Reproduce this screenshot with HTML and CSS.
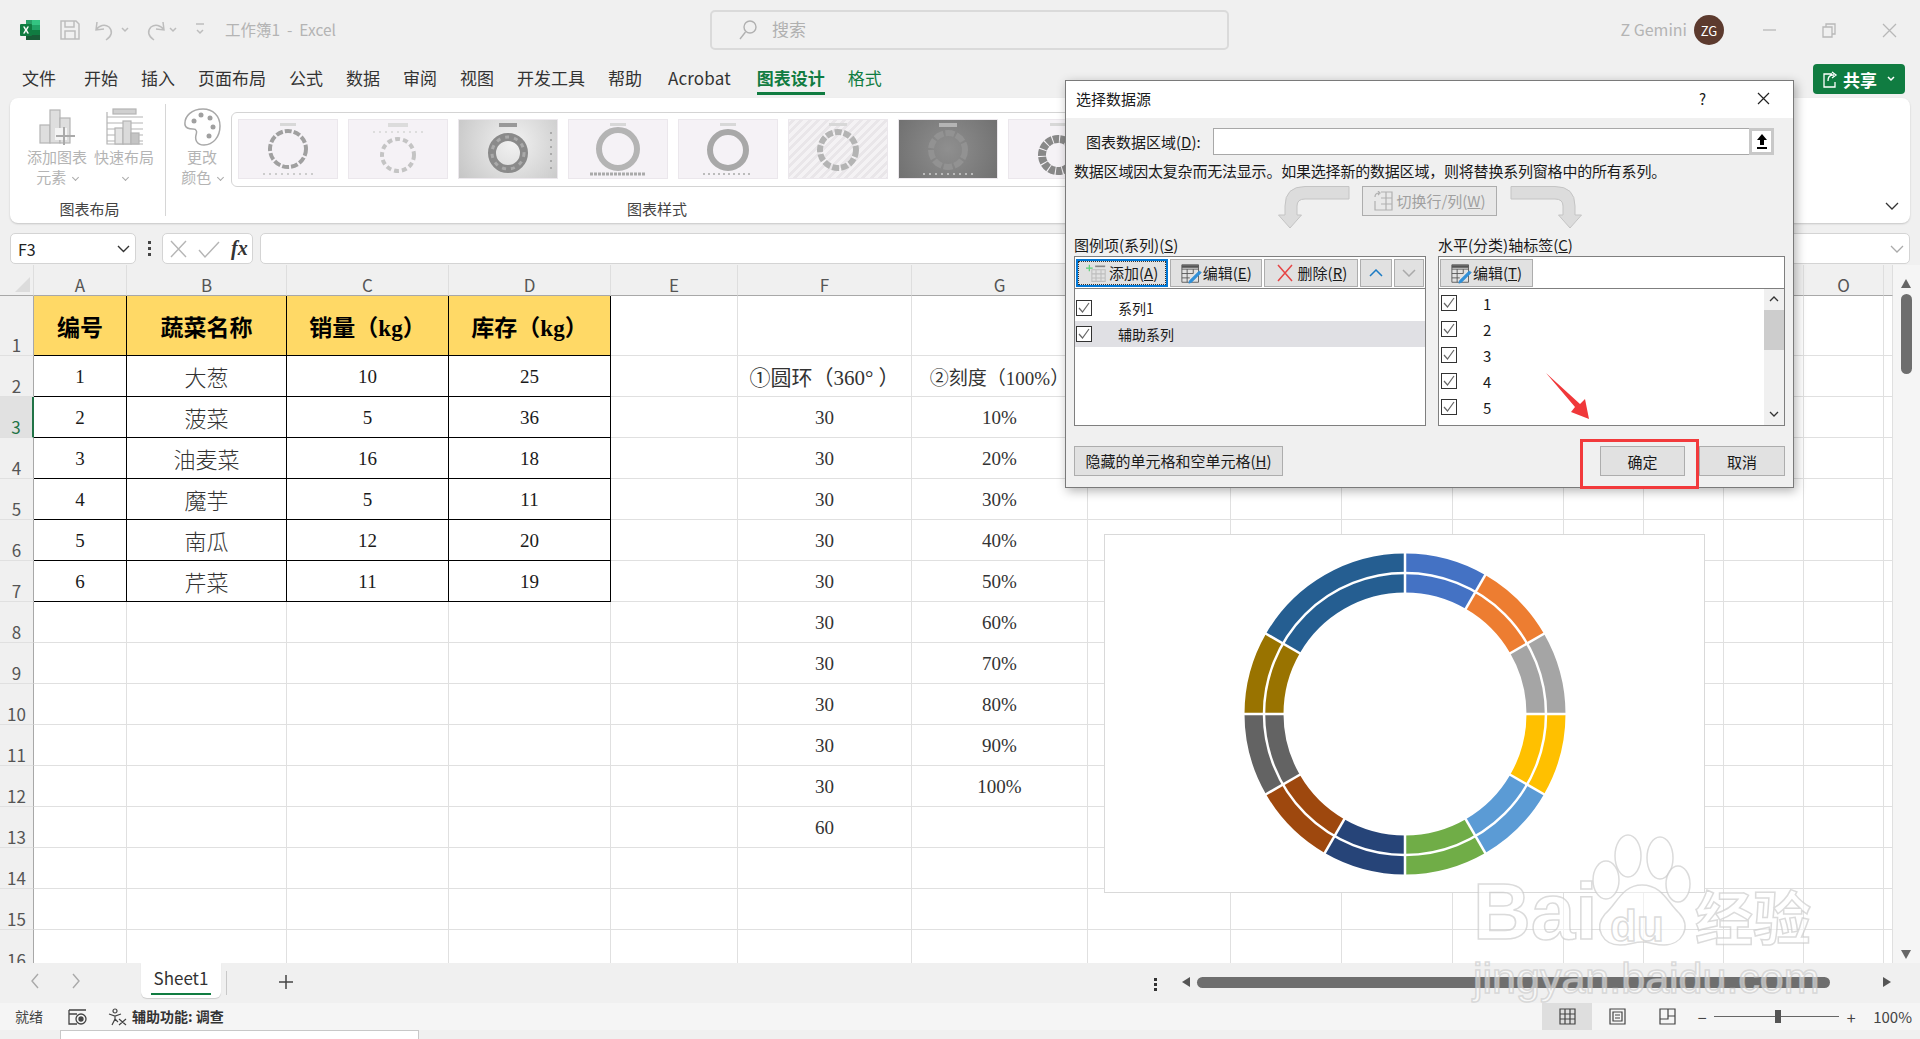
FILE: index.html
```html
<!DOCTYPE html>
<html lang="zh-CN">
<head>
<meta charset="utf-8">
<title>工作簿1 - Excel</title>
<link rel="stylesheet" href="styles.css">
</head>
<body>
<header class="titlebar">
  <div class="tb-left">
    <svg class="xl-logo" width="20" height="20" viewBox="0 0 20 20"><path d="M6 0h9l5 0v5H6z" fill="#33c481"/><path d="M6 5h14v5H6z" fill="#21a366"/><path d="M6 10h14v5H6z" fill="#107c41"/><path d="M6 15h14v5H6z" fill="#185c37"/><path d="M6 0h6v20H6z" fill="#185c37" opacity=".35"/><rect x="0" y="4" width="12" height="12" rx="1" fill="#107c41"/><path d="M3 6.500h1.800L6 9l1.300-2.500H9L7 10l2 3.500H7.200L6 11 4.800 13.500H3L5 10z" fill="#fff"/></svg>
    <svg class="qat" width="150" height="22" viewBox="0 0 150 22" fill="none" stroke="#bdbdbd" stroke-width="1.500"><path d="M1 2h15l3 3v15H1z"/><path d="M5 2v6h9V2M5 20v-8h10v8"/><path d="M37 3l-1 8 8-1M36 11c3-5 9-6 13-3 4 4 3 9-3 13"/><path d="M62 9l3 3 3-3"/><path d="M103 3l1 8-8-1M104 11c-3-5-9-6-13-3-4 4-3 9 3 13"/><path d="M110 9l3 3 3-3M136 5h8M137 11l3 3 3-3"/></svg>
    <span class="doc-title">工作簿1&nbsp;&nbsp;-&nbsp;&nbsp;Excel</span>
  </div>
  <div class="search">
    <svg width="18" height="22" viewBox="0 0 18 22" fill="none" stroke="#b0b0b0" stroke-width="1.400"><circle cx="11" cy="8" r="6"/><path d="M6.500 13L1 20"/></svg>
    <span>搜索</span>
  </div>
  <div class="tb-right">
    <span class="user">Z Gemini</span>
    <span class="avatar">ZG</span>
    <svg class="winctl" width="134" height="16" viewBox="0 0 134 16" fill="none" stroke="#b8b8b8" stroke-width="1.300"><path d="M0 8h13"/><path d="M60 5h9v10h-9zM63 5V2h9v10h-3"/><path d="M120 2l13 13M133 2l-13 13"/></svg>
  </div>
</header>

<nav class="tabs">
  <span class="tab tab-first">文件</span><span class="tab">开始</span><span class="tab">插入</span><span class="tab">页面布局</span><span class="tab">公式</span><span class="tab">数据</span><span class="tab">审阅</span><span class="tab">视图</span><span class="tab">开发工具</span><span class="tab">帮助</span><span class="tab tab-wide">Acrobat</span><span class="tab tab-wide tab-active">图表设计</span><span class="tab tab-green">格式</span>
  <button class="share">
    <svg width="16" height="17" viewBox="0 0 16 17" fill="none" stroke="#fff" stroke-width="1.300"><path d="M10 3H2v13h11v-5M6 10c0-4 2-6 5-6h1M10 1l4 3-4 3"/></svg>
    <span>共享</span>
    <svg class="share-chev" width="8" height="6" viewBox="0 0 8 6" fill="none" stroke="#fff" stroke-width="1.500"><path d="M1 1l3 3 3-3"/></svg>
  </button>
</nav>

<section class="ribbon">
  <div class="rb-group rb-g1">
    <div class="rb-btns">
      <div class="rb-btn rb-b1">
        <svg width="37" height="38" viewBox="0 0 37 38" fill="none" stroke="#b4b4b4" stroke-width="1.200"><rect x="1" y="17" width="10" height="18" fill="#dedede"/><rect x="11" y="2" width="10" height="33" fill="#dedede"/><rect x="21" y="10" width="10" height="25" fill="#dedede"/><rect x="16" y="20" width="12" height="12" fill="#f4f4f4" stroke="none"/><path d="M25 19v18M17 28h19" stroke="#aaa" stroke-width="2"/></svg>
        <span>添加图表</span><span>元素 <i class="chev"></i></span>
      </div>
      <div class="rb-btn rb-b2">
        <svg width="37" height="38" viewBox="0 0 37 38" fill="none" stroke="#b4b4b4" stroke-width="1.200"><rect x="7" y="1" width="23" height="5" fill="#d0d0d0"/><path d="M1 9h36M1 15h36M1 21h36M1 27h36M1 33h36M1 4v32h36"/><rect x="9" y="20" width="8" height="16" fill="#e4e4e4"/><rect x="17" y="13" width="8" height="23" fill="#dadada"/><rect x="25" y="25" width="8" height="11" fill="#c4c4c4"/></svg>
        <span>快速布局</span><span><i class="chev"></i></span>
      </div>
    </div>
    <div class="rb-label">图表布局</div>
  </div>
  <div class="rb-group rb-g2">
    <div class="rb-row">
      <div class="rb-btn rb-b3">
        <svg width="37" height="38" viewBox="0 0 37 38" fill="#fff" stroke="#a8a8a8" stroke-width="1.500"><path d="M19 1C8 1 0 8 1 17c1 4 5 4 8 4 4 0 4 3 3 6-1 4 0 10 8 10 9 0 16-8 16-19C36 8 29 1 19 1z"/><g fill="#a0a0a0" stroke="none"><circle cx="10" cy="13" r="2.500"/><circle cx="17" cy="7" r="2.500"/><circle cx="26" cy="10" r="2.500"/><circle cx="29" cy="19" r="2.500"/><circle cx="25" cy="28" r="2.500"/></g></svg>
        <span>更改</span><span>颜色 <i class="chev"></i></span>
      </div>
      <div class="gallery">
        <div class="thumb"><svg width="100" height="60"><rect x="42" y="4" width="16" height="3" fill="#d8d8d8"/><circle cx="50" cy="30" r="18" fill="none" stroke="#a0a0a0" stroke-width="4" stroke-dasharray="7 2"/><path d="M25 55h50" stroke="#ccc" stroke-dasharray="2 4" stroke-width="2"/></svg></div>
        <div class="thumb"><svg width="100" height="60"><rect x="40" y="4" width="20" height="4" fill="#dcdcdc"/><path d="M25 13h50" stroke="#ddd" stroke-dasharray="2 4" stroke-width="2"/><circle cx="50" cy="36" r="16" fill="none" stroke="#c4c4c4" stroke-width="4" stroke-dasharray="5 3"/></svg></div>
        <div class="thumb thumb-grey"><svg width="100" height="60"><rect x="41" y="4" width="18" height="4" fill="#999"/><circle cx="50" cy="34" r="16" fill="none" stroke="#8a8a8a" stroke-width="8"/><circle cx="50" cy="34" r="16" fill="none" stroke="#aaa" stroke-width="3" stroke-dasharray="4 5"/><path d="M93 13v40" stroke="#aaa" stroke-dasharray="2 5" stroke-width="2"/></svg></div>
        <div class="thumb"><svg width="100" height="60"><rect x="42" y="4" width="16" height="3" fill="#d8d8d8"/><circle cx="50" cy="30" r="19" fill="none" stroke="#b4b4b4" stroke-width="6"/><path d="M22 55h56" stroke="#aaa" stroke-dasharray="3 1" stroke-width="3"/></svg></div>
        <div class="thumb"><svg width="100" height="60"><rect x="42" y="4" width="16" height="3" fill="#d8d8d8"/><circle cx="50" cy="31" r="18" fill="none" stroke="#a8a8a8" stroke-width="6"/><path d="M25 55h50" stroke="#bbb" stroke-dasharray="2 3" stroke-width="2"/></svg></div>
        <div class="thumb thumb-stripe"><svg width="100" height="60"><rect x="41" y="4" width="18" height="3" fill="#d8d8d8"/><circle cx="50" cy="31" r="18" fill="none" stroke="#b4b4b4" stroke-width="6" stroke-dasharray="7 2"/></svg></div>
        <div class="thumb thumb-dark"><svg width="100" height="60"><rect x="41" y="4" width="18" height="4" fill="#b4b4b4"/><circle cx="50" cy="31" r="17" fill="none" stroke="#929292" stroke-width="6" stroke-dasharray="9 2"/><path d="M25 55h50" stroke="#bbb" stroke-dasharray="2 4" stroke-width="2"/></svg></div>
        <div class="thumb"><svg width="100" height="60"><rect x="42" y="4" width="16" height="3" fill="#d8d8d8"/><circle cx="50" cy="36" r="16" fill="none" stroke="#888" stroke-width="8" stroke-dasharray="6 1"/></svg></div>
      </div>
    </div>
    <div class="rb-label">图表样式</div>
  </div>
  <svg class="rb-collapse" width="14" height="9" viewBox="0 0 14 9" fill="none" stroke="#333" stroke-width="1.300"><path d="M1 1l6 6 6-6"/></svg>
</section>

<section class="fbar">
  <div class="namebox"><span>F3</span><svg width="13" height="8" viewBox="0 0 13 8" fill="none" stroke="#333" stroke-width="1.400"><path d="M1 1l5.500 5.500L12 1"/></svg></div>
  <div class="fdots"><i></i><i></i><i></i></div>
  <div class="fxbox">
    <svg width="54" height="20" viewBox="0 0 54 20" fill="none" stroke="#b5b5b5" stroke-width="1.400"><path d="M1 2l15 16M16 2L1 18M29 11l6 7 14-15"/></svg>
    <span class="fx">fx</span>
  </div>
  <div class="finput"><svg width="14" height="8" viewBox="0 0 14 8" fill="none" stroke="#aaa" stroke-width="1.300"><path d="M1 1l6 6 6-6"/></svg></div>
</section>

<main class="sheet">
  <div class="grid-wrap">
    <table class="grid">
      <colgroup><col class="w34"><col class="w93"><col class="w160"><col class="w162"><col class="w162"><col class="w127"><col class="w174"><col class="w176"><col class="w143"><col class="w111"><col class="w111"><col class="w111"><col class="w80"><col class="w80"><col class="w80"><col class="w80"><col class="w9"></colgroup>
      <thead><tr><th class="corner"><span class="tri"></span></th><th class="hc">A</th><th class="hc">B</th><th class="hc">C</th><th class="hc">D</th><th class="hc">E</th><th class="hc">F</th><th class="hc">G</th><th class="hc">H</th><th class="hc">I</th><th class="hc">J</th><th class="hc">K</th><th class="hc">L</th><th class="hc">M</th><th class="hc">N</th><th class="hc">O</th><th class="hc"></th></tr></thead>
      <tbody>
        <tr class="r1"><th class="hr">1</th><td class="y">编号</td><td class="y">蔬菜名称</td><td class="y">销量（kg）</td><td class="y">库存（kg）</td><td></td><td></td><td></td><td></td><td></td><td></td><td></td><td></td><td></td><td></td><td></td><td></td></tr>
        <tr><th class="hr">2</th><td class="b">1</td><td class="b z">大葱</td><td class="b">10</td><td class="b">25</td><td></td><td class="s s-ring">①圆环（360° ）</td><td class="s s-scale">②刻度（100%）</td><td></td><td></td><td></td><td></td><td></td><td></td><td></td><td></td><td></td></tr>
        <tr><th class="hr hr-sel">3</th><td class="b">2</td><td class="b z">菠菜</td><td class="b">5</td><td class="b">36</td><td></td><td class="s">30</td><td class="s">10%</td><td></td><td></td><td></td><td></td><td></td><td></td><td></td><td></td><td></td></tr>
        <tr><th class="hr">4</th><td class="b">3</td><td class="b z">油麦菜</td><td class="b">16</td><td class="b">18</td><td></td><td class="s">30</td><td class="s">20%</td><td></td><td></td><td></td><td></td><td></td><td></td><td></td><td></td><td></td></tr>
        <tr><th class="hr">5</th><td class="b">4</td><td class="b z">魔芋</td><td class="b">5</td><td class="b">11</td><td></td><td class="s">30</td><td class="s">30%</td><td></td><td></td><td></td><td></td><td></td><td></td><td></td><td></td><td></td></tr>
        <tr><th class="hr">6</th><td class="b">5</td><td class="b z">南瓜</td><td class="b">12</td><td class="b">20</td><td></td><td class="s">30</td><td class="s">40%</td><td></td><td></td><td></td><td></td><td></td><td></td><td></td><td></td><td></td></tr>
        <tr><th class="hr">7</th><td class="b">6</td><td class="b z">芹菜</td><td class="b">11</td><td class="b">19</td><td></td><td class="s">30</td><td class="s">50%</td><td></td><td></td><td></td><td></td><td></td><td></td><td></td><td></td><td></td></tr>
        <tr><th class="hr">8</th><td></td><td></td><td></td><td></td><td></td><td class="s">30</td><td class="s">60%</td><td></td><td></td><td></td><td></td><td></td><td></td><td></td><td></td><td></td></tr>
        <tr><th class="hr">9</th><td></td><td></td><td></td><td></td><td></td><td class="s">30</td><td class="s">70%</td><td></td><td></td><td></td><td></td><td></td><td></td><td></td><td></td><td></td></tr>
        <tr><th class="hr">10</th><td></td><td></td><td></td><td></td><td></td><td class="s">30</td><td class="s">80%</td><td></td><td></td><td></td><td></td><td></td><td></td><td></td><td></td><td></td></tr>
        <tr><th class="hr">11</th><td></td><td></td><td></td><td></td><td></td><td class="s">30</td><td class="s">90%</td><td></td><td></td><td></td><td></td><td></td><td></td><td></td><td></td><td></td></tr>
        <tr><th class="hr">12</th><td></td><td></td><td></td><td></td><td></td><td class="s">30</td><td class="s">100%</td><td></td><td></td><td></td><td></td><td></td><td></td><td></td><td></td><td></td></tr>
        <tr><th class="hr">13</th><td></td><td></td><td></td><td></td><td></td><td class="s">60</td><td></td><td></td><td></td><td></td><td></td><td></td><td></td><td></td><td></td><td></td></tr>
        <tr><th class="hr">14</th><td></td><td></td><td></td><td></td><td></td><td></td><td></td><td></td><td></td><td></td><td></td><td></td><td></td><td></td><td></td><td></td></tr>
        <tr><th class="hr">15</th><td></td><td></td><td></td><td></td><td></td><td></td><td></td><td></td><td></td><td></td><td></td><td></td><td></td><td></td><td></td><td></td></tr>
        <tr><th class="hr">16</th><td></td><td></td><td></td><td></td><td></td><td></td><td></td><td></td><td></td><td></td><td></td><td></td><td></td><td></td><td></td><td></td></tr>
      </tbody>
    </table>
    <div class="chart">
      <svg width="600" height="358" viewBox="-300 -179 600 358" fill="none" stroke-width="39">
        <g class="ring">
          <circle r="141" pathLength="360" stroke-dasharray="30 330" stroke="#4472c4" transform="rotate(-90)"/>
          <circle r="141" pathLength="360" stroke-dasharray="30 330" stroke="#ed7d31" transform="rotate(-60)"/>
          <circle r="141" pathLength="360" stroke-dasharray="30 330" stroke="#a5a5a5" transform="rotate(-30)"/>
          <circle r="141" pathLength="360" stroke-dasharray="30 330" stroke="#ffc000" transform="rotate(0)"/>
          <circle r="141" pathLength="360" stroke-dasharray="30 330" stroke="#5b9bd5" transform="rotate(30)"/>
          <circle r="141" pathLength="360" stroke-dasharray="30 330" stroke="#70ad47" transform="rotate(60)"/>
          <circle r="141" pathLength="360" stroke-dasharray="30 330" stroke="#264478" transform="rotate(90)"/>
          <circle r="141" pathLength="360" stroke-dasharray="30 330" stroke="#9e480e" transform="rotate(120)"/>
          <circle r="141" pathLength="360" stroke-dasharray="30 330" stroke="#636363" transform="rotate(150)"/>
          <circle r="141" pathLength="360" stroke-dasharray="30 330" stroke="#997300" transform="rotate(180)"/>
          <circle r="141" pathLength="360" stroke-dasharray="60 300" stroke="#255e91" transform="rotate(210)"/>
        </g>
        <circle r="141" stroke="#fff" stroke-width="2.500"/>
        <g stroke="#fff" stroke-width="2.500">
          <path d="M0-119V-163"/>
          <path d="M0-119V-163" transform="rotate(30)"/><path d="M0-119V-163" transform="rotate(60)"/><path d="M0-119V-163" transform="rotate(90)"/><path d="M0-119V-163" transform="rotate(120)"/><path d="M0-119V-163" transform="rotate(150)"/><path d="M0-119V-163" transform="rotate(180)"/><path d="M0-119V-163" transform="rotate(210)"/><path d="M0-119V-163" transform="rotate(240)"/><path d="M0-119V-163" transform="rotate(270)"/><path d="M0-119V-163" transform="rotate(300)"/>
        </g>
      </svg>
    </div>
  </div>
  <aside class="vscroll">
    <i class="tri-up"></i>
    <i class="vthumb"></i>
    <i class="tri-down"></i>
  </aside>
</main>

<footer class="sheetbar">
  <svg class="sb-nav" width="50" height="16" viewBox="0 0 50 16" fill="none" stroke="#aaa" stroke-width="1.400"><path d="M7 1L1 8l6 7M42 1l6 7-6 7"/></svg>
  <div class="sheet-tab"><span>Sheet1</span></div>
  <i class="sb-sep"></i>
  <svg class="sb-plus" width="14" height="14" viewBox="0 0 14 14" stroke="#444" stroke-width="1.500"><path d="M7 0v14M0 7h14"/></svg>
  <div class="sb-dots"><i></i><i></i><i></i></div>
  <i class="tri-left"></i>
  <div class="hscroll"></div>
  <i class="tri-right"></i>
</footer>

<footer class="status">
  <span class="st-ready">就绪</span>
  <svg class="st-macro" width="19" height="18" viewBox="0 0 19 18" fill="none" stroke="#444" stroke-width="1.300"><path d="M1 2h17M1 6h8M1 2v14h8"/><circle cx="13" cy="11" r="5"/><circle cx="13" cy="11" r="2" fill="#444"/></svg>
  <svg class="st-acc" width="19" height="18" viewBox="0 0 19 18" fill="none" stroke="#444" stroke-width="1.200"><circle cx="7" cy="3" r="2"/><path d="M1 6l6 2 6-2M7 8v3l-3 6M7 11l3 3M11 11l7 6M18 11l-7 6"/></svg>
  <strong class="st-text">辅助功能: 调查</strong>
  <div class="views">
    <span class="view view-on"><svg width="17" height="17" viewBox="0 0 17 17" fill="none" stroke="#444" stroke-width="1.200"><path d="M1 1h15v15H1zM1 6h15M1 11h15M6 1v15M11 1v15"/></svg></span>
    <span class="view"><svg width="17" height="17" viewBox="0 0 17 17" fill="none" stroke="#444" stroke-width="1.200"><path d="M1 1h15v15H1zM4 4h9v9H4zM6 7h5M6 10h5"/></svg></span>
    <span class="view"><svg width="17" height="17" viewBox="0 0 17 17" fill="none" stroke="#444" stroke-width="1.200"><path d="M1 1h15v15H1zM1 11h8V1M9 8h7"/></svg></span>
  </div>
  <div class="zoom">
    <span class="zm">−</span>
    <div class="slider"><i></i></div>
    <span class="zm">+</span>
    <span class="zv">100%</span>
  </div>
</footer>
<div class="strip"><div class="strip-win"></div></div>

<div class="dialog">
  <div class="dl-title">
    <span>选择数据源</span>
    <span class="dl-help">?</span>
    <svg width="13" height="13" viewBox="0 0 13 13" fill="none" stroke="#222" stroke-width="1.200"><path d="M1 1l11 11M12 1L1 12"/></svg>
  </div>
  <div class="dl-body">
    <div class="range">
      <label>图表数据区域(<u>D</u>):</label>
      <div class="range-input"><span class="range-btn"><svg width="12" height="16" viewBox="0 0 12 16"><path d="M6 0l5 6H8v5H4V6H1zM1 13h10v2H1z" fill="#000"/></svg></span></div>
    </div>
    <p class="info">数据区域因太复杂而无法显示。如果选择新的数据区域，则将替换系列窗格中的所有系列。</p>
    <div class="switch">
      <svg width="72" height="43" viewBox="0 0 72 43"><path d="M71 .5H27Q7 .5 7 20v9H.5L12 42 23.500 29H19V20q0-7 8-7H71z" fill="#dcdcdc" stroke="#c4c4c4"/></svg>
      <span class="btn btn-off">
        <svg width="20" height="20" viewBox="0 0 20 20" fill="none" stroke="#b0b0b0" stroke-width="1.200"><path d="M8 1h11v18H2V10M8 7h11M8 13h11M13 1v18"/><path d="M2 6c0-3 2-4 4-4M5 0l2 2-2 2" /></svg>
        <span>切换行/列(<u>W</u>)</span>
      </span>
      <svg width="72" height="43" viewBox="0 0 72 43"><path d="M1 .5H45Q65 .5 65 20v9h6.500L60 42 48.500 29H53V20q0-7-8-7H1z" fill="#dcdcdc" stroke="#c4c4c4"/></svg>
    </div>
    <div class="lists">
      <div class="list-col">
        <div class="list-label">图例项(系列)(<u>S</u>)</div>
        <div class="listbox">
          <div class="list-tools">
            <span class="btn tool tool-add"><svg width="20" height="20" viewBox="0 0 24 22" fill="none" stroke="#bdbdbd" stroke-width="1.300"><path d="M7 7h16v14H7zM7 12h16M7 17h16M12 7v14M18 7v14"/><path d="M11 3h12" stroke="#888" stroke-width="2"/><path d="M4 1v8M0 5h8" stroke="#5fd07a" stroke-width="1.500"/></svg><span>添加(<u>A</u>)</span></span>
            <span class="btn tool tool-edit"><svg width="21" height="21" viewBox="0 0 24 24" fill="none" stroke="#555" stroke-width="1"><path d="M1 2h19v20H1zM1 7h19M1 12h13M1 17h9M7 7v15M14 7v5"/><path d="M1 4h19" stroke-width="3"/><path d="M21 9L10 20l-1 3 3-1L23 11z" fill="#2f8fd8" stroke="#2f8fd8"/></svg><span>编辑(<u>E</u>)</span></span>
            <span class="btn tool tool-del"><svg width="16" height="18" viewBox="0 0 16 18" fill="none" stroke="#e64545" stroke-width="1.500"><path d="M1 1l14 16M15 1L1 17"/></svg><span>删除(<u>R</u>)</span></span>
            <span class="btn tool tool-up"><svg width="14" height="8" viewBox="0 0 14 8" fill="none" stroke="#1c7cc4" stroke-width="1.500"><path d="M1 7l6-6 6 6"/></svg></span>
            <span class="btn tool tool-down"><svg width="14" height="8" viewBox="0 0 14 8" fill="none" stroke="#aaa" stroke-width="1.500"><path d="M1 1l6 6 6-6"/></svg></span>
          </div>
          <div class="rows rows-left">
            <div class="lrow"><span class="chk"><svg width="12" height="12" viewBox="0 0 12 12" fill="none" stroke="#666" stroke-width="1.200"><path d="M1 6l3.500 4L11 1"/></svg></span><span class="ltext">系列1</span></div>
            <div class="lrow lrow-sel"><span class="chk"><svg width="12" height="12" viewBox="0 0 12 12" fill="none" stroke="#666" stroke-width="1.200"><path d="M1 6l3.500 4L11 1"/></svg></span><span class="ltext">辅助系列</span></div>
          </div>
        </div>
      </div>
      <div class="list-col">
        <div class="list-label">水平(分类)轴标签(<u>C</u>)</div>
        <div class="listbox">
          <div class="list-tools">
            <span class="btn tool tool-edit"><svg width="21" height="21" viewBox="0 0 24 24" fill="none" stroke="#555" stroke-width="1"><path d="M1 2h19v20H1zM1 7h19M1 12h13M1 17h9M7 7v15M14 7v5"/><path d="M1 4h19" stroke-width="3"/><path d="M21 9L10 20l-1 3 3-1L23 11z" fill="#2f8fd8" stroke="#2f8fd8"/></svg><span>编辑(<u>T</u>)</span></span>
          </div>
          <div class="rows-right">
            <div class="rows">
              <div class="rrow"><span class="chk"><svg width="12" height="12" viewBox="0 0 12 12" fill="none" stroke="#666" stroke-width="1.200"><path d="M1 6l3.500 4L11 1"/></svg></span><span class="rtext">1</span></div>
              <div class="rrow"><span class="chk"><svg width="12" height="12" viewBox="0 0 12 12" fill="none" stroke="#666" stroke-width="1.200"><path d="M1 6l3.500 4L11 1"/></svg></span><span class="rtext">2</span></div>
              <div class="rrow"><span class="chk"><svg width="12" height="12" viewBox="0 0 12 12" fill="none" stroke="#666" stroke-width="1.200"><path d="M1 6l3.500 4L11 1"/></svg></span><span class="rtext">3</span></div>
              <div class="rrow"><span class="chk"><svg width="12" height="12" viewBox="0 0 12 12" fill="none" stroke="#666" stroke-width="1.200"><path d="M1 6l3.500 4L11 1"/></svg></span><span class="rtext">4</span></div>
              <div class="rrow"><span class="chk"><svg width="12" height="12" viewBox="0 0 12 12" fill="none" stroke="#666" stroke-width="1.200"><path d="M1 6l3.500 4L11 1"/></svg></span><span class="rtext">5</span></div>
            </div>
            <div class="list-sb">
              <svg width="10" height="6" viewBox="0 0 10 6" fill="none" stroke="#333" stroke-width="1.300"><path d="M1 5l4-4 4 4"/></svg>
              <i class="list-thumb"></i>
              <svg class="list-sb-down" width="10" height="6" viewBox="0 0 10 6" fill="none" stroke="#333" stroke-width="1.300"><path d="M1 1l4 4 4-4"/></svg>
            </div>
          </div>
        </div>
      </div>
    </div>
    <div class="dl-foot">
      <span class="btn foot-hidden">隐藏的单元格和空单元格(<u>H</u>)</span>
      <span class="btn foot-ok">确定</span>
      <span class="btn foot-cancel">取消</span>
    </div>
  </div>
</div>

<div class="redbox"></div>
<svg class="redarrow" width="44" height="46" viewBox="0 0 44 46"><path d="M0 0L34 31l5-5 4 20-18-7 4-5z" fill="#f0383a"/></svg>

<div class="watermark">
  <svg class="wm-paw" width="110" height="120" viewBox="0 0 110 120" fill="rgba(255,255,255,.5)" stroke="rgba(200,200,200,.65)" stroke-width="1.500"><ellipse cx="16" cy="47" rx="13" ry="19"/><ellipse cx="38" cy="23" rx="13" ry="21"/><ellipse cx="70" cy="25" rx="13" ry="21"/><ellipse cx="88" cy="51" rx="12" ry="18"/><path d="M52 52c20 0 26 18 37 28 13 14 3 32-15 32-9 0-14-3-22-3s-13 3-22 3c-17 0-27-17-15-31 12-10 17-29 37-29z"/></svg>
  <span class="wm-bai">Bai</span>
  <span class="wm-du">du</span>
  <span class="wm-cn">经验</span>
  <span class="wm-url">jingyan.baidu.com</span>
</div>
</body>
</html>
```

FILE: styles.css
```css
* { box-sizing: border-box; }
html, body { margin: 0; padding: 0; }
body {
  width: 1920px;
  height: 1039px;
  overflow: hidden;
  position: relative;
  background: #f0f0f0;
  font-family: "Noto Sans CJK SC", "Liberation Sans", sans-serif;
  font-size: 15px;
  color: #222;
}
svg { display: block; flex: none; }

/* title bar */
.titlebar { display: flex; align-items: center; height: 60px; }
.tb-left { flex: 0 0 710px; display: flex; align-items: center; padding-left: 20px; }
.qat { margin-left: 20px; }
.doc-title { margin: -2px 0 0 15px; font-size: 15.500px; color: #b4b4b4; }
.search {
  flex: 0 0 519px; height: 40px; display: flex; align-items: center; gap: 13px;
  padding-left: 27px; border: 2px solid #dadada; border-radius: 5px;
  font-size: 17px; color: #b0b0b0;
}
.search span { margin: -3px 0 0 2px; }
.tb-right { flex: 1; display: flex; align-items: center; justify-content: flex-end; padding-right: 23px; }
.user { font-size: 16px; color: #b4b4b4; margin: -2px 7px 0 0; }
.avatar {
  width: 30px; height: 30px; border-radius: 50%; background: #5c3a2e; color: #fff;
  font-size: 13px; display: flex; align-items: center; justify-content: center; margin-right: 39px;
}

/* tabs */
.tabs { height: 38px; display: flex; align-items: flex-start; gap: 23px; padding: 6px 15px 0 22px; }
.tab { font-size: 17px; line-height: 24px; height: 29px; color: #333; position: relative; white-space: nowrap; }
.tab-first { margin-right: 5px; }
.tab-wide { margin-left: 3px; letter-spacing: .15px; }
.tab-green, .tab-active { color: #107c41; }
.tab-active { font-weight: 700; border-bottom: 3px solid #107c41; letter-spacing: 0; }
.share {
  margin: -2px 0 0 auto; width: 92px; height: 30px; border: 0; border-radius: 4px; background: #107c41;
  color: #fff; font: 700 17px "Noto Sans CJK SC", sans-serif; display: flex; align-items: center; padding: 0 0 0 9px;
}
.share span { margin-left: 5px; }
.share-chev { margin-left: 10px; }

/* ribbon */
.ribbon {
  height: 125px; margin: 0 10px; background: #fff; border-radius: 8px; display: flex; position: relative;
  box-shadow: 0 1px 2px rgba(0,0,0,.18); overflow: hidden;
}
.rb-group { margin-top: 6px; height: 112px; display: flex; flex-direction: column; justify-content: space-between; }
.rb-g1 { width: 156px; border-right: 1px solid #d6d6d6; flex: none; }
.rb-g2 { width: 978px; flex: none; }
.rb-btns, .rb-row { display: flex; padding-top: 4px; }
.rb-btn { display: flex; flex-direction: column; align-items: center; font-size: 15px; line-height: 20px; color: #b4b4b4; white-space: nowrap; }
.rb-btn svg { margin-bottom: 1px; }
.rb-b1 { width: 62px; margin: 0 0 0 16px; }
.rb-b2 { width: 62px; margin-left: 5px; }
.rb-b3 { width: 50px; margin-left: 11px; }
.chev { display: inline-block; width: 5px; height: 5px; border-right: 1px solid #aaa; border-bottom: 1px solid #aaa; transform: rotate(45deg); margin: 0 0 3px 3px; }
.rb-label { text-align: center; font-size: 15px; line-height: 20px; color: #444; margin: 0 0 -3px 4px; }
.gallery {
  margin: 4px 0 0 4px; height: 75px; width: 900px; padding: 6px; display: flex; gap: 10px; overflow: hidden;
  border: 1px solid #d4d4d4; border-radius: 6px;
}
.thumb { flex: 0 0 100px; height: 60px; background: #f5f2f6; outline: 1px solid #ebe7ec; outline-offset: -1px; }
.thumb-grey { background: radial-gradient(circle at 55% 40%, #f2f2f2, #c4c4c4); }
.thumb-stripe { background: repeating-linear-gradient(135deg, #f4f2f4 0 3px, #e9e6e9 3px 6px); }
.thumb-dark { background: radial-gradient(circle, #8f8f8f, #707070); }
.rb-collapse { position: absolute; right: 11px; top: 104px; }

/* formula bar */
.fbar { display: flex; height: 31px; margin: 10px 10px 0; }
.namebox, .fxbox, .finput { background: #fff; border: 1px solid #d4d4d4; border-radius: 5px; display: flex; align-items: center; }
.namebox { width: 126px; padding: 0 5px 0 7px; justify-content: space-between; font-size: 16px; }
.fdots { width: 26px; display: flex; flex-direction: column; align-items: center; justify-content: center; gap: 3px; }
.fdots i { width: 3px; height: 3px; background: #444; }
.fxbox { width: 91px; padding-left: 7px; gap: 7px; }
.fx { font: italic 700 20px "Liberation Serif", serif; color: #333; }
.finput { flex: 1; margin-left: 7px; justify-content: flex-end; padding-right: 5px; }

/* sheet */
.sheet { display: flex; height: 698px; margin-top: 1px; overflow: hidden; }
.grid-wrap { width: 1893px; flex: none; position: relative; overflow: hidden; background: #fff; }
.grid { table-layout: fixed; width: 1893px; border-collapse: separate; border-spacing: 0; }
.w34 { width: 34px; } .w93 { width: 93px; } .w160 { width: 160px; } .w162 { width: 162px; } .w127 { width: 127px; }
.w174 { width: 174px; } .w176 { width: 176px; } .w143 { width: 143px; } .w111 { width: 111px; }
.w80 { width: 80px; } .w9 { width: 9px; }
.grid thead th { height: 31px; background: #f0f0f0; border-bottom: 1px solid #a8a8a8; font-weight: 400; font-size: 17px; line-height: 20px; color: #555; padding: 10px 0 0; position: relative; }
.hc { border-right: 1px solid #dedede; }
.grid thead th.corner { border-right: 1px solid #dedede; }
.tri { position: absolute; right: 3px; bottom: 3px; width: 0; height: 0; border-style: solid; border-width: 0 0 15px 15px; border-color: transparent transparent #dcdcdc transparent; }
.grid tbody tr { height: 41px; }
.grid tbody tr.r1 { height: 60px; }
.grid td { padding: 1px 0 0; border-right: 1px solid #e0e0e0; border-bottom: 1px solid #e0e0e0; text-align: center; font-family: "Liberation Serif", "Noto Sans CJK SC", serif; font-size: 19px; color: #1a1a1a; overflow: visible; white-space: nowrap; }
.hr { background: #f0f0f0; border-right: 1px solid #a8a8a8; border-bottom: 1px solid #e0e0e0; font-weight: 400; font-size: 17px; line-height: 20px; color: #555; padding: 0; vertical-align: bottom; text-align: center; }
.hr-sel { background: #e1e1e1; color: #217346; border-right: 2px solid #217346; }
.grid td.y { background: #ffd966; border-right: 1px solid #000; border-bottom: 1px solid #000; font-weight: 700; font-size: 23px; color: #000; }
.grid td.b { border-right: 1px solid #000; border-bottom: 1px solid #000; }
.grid td.z { font-size: 22px; font-weight: 300; color: #333; padding-top: 0; }
.grid td.s { font-size: 19px; color: #333; }
.grid td.s-ring { font-size: 21px; padding-top: 0; }
.grid td.s-scale { font-size: 19px; }
.chart { position: absolute; left: 1104px; top: 269px; width: 601px; height: 359px; background: #fff; border: 1px solid #d9d9d9; }

.vscroll { flex: 1; position: relative; background: #f5f5f5; display: flex; flex-direction: column; align-items: center; padding-top: 14px; }
.tri-up { width: 0; height: 0; border-left: 5px solid transparent; border-right: 5px solid transparent; border-bottom: 9px solid #666; margin-left: -1px; }
.vthumb { width: 11px; height: 80px; background: #6e6e6e; border-radius: 6px; margin: 6px 0 0 -1px; }
.tri-down { margin: auto 0 4px -1px; width: 0; height: 0; border-left: 5px solid transparent; border-right: 5px solid transparent; border-top: 9px solid #666; }

/* sheet tabs */
.sheetbar { height: 40px; display: flex; align-items: flex-start; background: #f0f0f0; }
.sb-nav { margin: 10px 0 0 31px; }
.sheet-tab { margin-left: 60px; width: 80px; height: 35px; background: #fff; border-radius: 0 0 6px 6px; box-shadow: 0 1px 1px rgba(0,0,0,.15); padding: 2px 10px 0; font-size: 17px; color: #333; }
.sheet-tab span { display: block; height: 30px; line-height: 26px; text-align: center; border-bottom: 2px solid #107c41; }
.sb-sep { width: 1px; height: 24px; background: #c8c8c8; margin: 8px 0 0 5px; }
.sb-plus { margin: 12px 0 0 52px; }
.sb-dots { margin: 15px 0 0 861px; display: flex; flex-direction: column; gap: 2px; }
.sb-dots i { width: 3px; height: 3px; background: #333; }
.tri-left { margin: 14px 0 0 25px; width: 0; height: 0; border-top: 5px solid transparent; border-bottom: 5px solid transparent; border-right: 8px solid #555; }
.hscroll { margin: 14px 0 0 7px; width: 633px; height: 11px; border-radius: 6px; background: #6e6e6e; }
.tri-right { margin: 14px 0 0 53px; width: 0; height: 0; border-top: 5px solid transparent; border-bottom: 5px solid transparent; border-left: 8px solid #555; }

/* status bar */
.status { height: 27px; background: #f5f5f5; display: flex; align-items: center; font-size: 14px; color: #444; }
.st-ready { margin: -2px 0 0 15px; }
.st-macro { margin-left: 25px; }
.st-acc { margin-left: 21px; }
.st-text { margin: -2px 0 0 5px; font-size: 14px; font-weight: 700; color: #333; }
.views { margin-left: auto; display: flex; height: 27px; }
.view { width: 50px; display: flex; align-items: center; justify-content: center; }
.view-on { background: #dedede; }
.zoom { display: flex; align-items: center; padding-right: 10px; margin-left: -2px; }
.zm { width: 26px; text-align: center; font-size: 16px; margin: 0 -1px; color: #444; }
.slider { width: 125px; height: 1px; background: #666; position: relative; }
.slider i { position: absolute; left: 61px; top: -6px; width: 6px; height: 13px; background: #555; }
.zv { margin: 0 -2px 0 10px; font-size: 15px; }
.strip { height: 9px; background: #f0f0f0; padding-left: 60px; }
.strip-win { width: 359px; height: 9px; background: #fff; border: 1px solid #c8c8c8; border-bottom: 0; }

/* dialog */
.dialog {
  position: absolute; left: 1065px; top: 80px; width: 729px; height: 408px; background: #f0f0f0;
  border: 1px solid #7a7a7a; box-shadow: 2px 3px 10px rgba(0,0,0,.3); font-size: 15px; color: #1a1a1a;
}
.dl-title { height: 37px; background: #fff; display: flex; align-items: center; padding: 0 23px 2px 10px; }
.dl-help { margin: 0 51px 0 auto; font-size: 15px; }
.dl-body { padding: 10px 8px 0; }
.range { display: flex; height: 27px; align-items: center; padding-left: 12px; padding-right: 11px; }
.range label { width: 127px; flex: none; white-space: nowrap; margin-top: -1px; }
.range-input { flex: 1; height: 27px; background: #fff; border: 1px solid #a8a8a8; display: flex; justify-content: flex-end; }
.range-btn { width: 25px; margin: -1px -1px -1px 0; background: #fff; border: 3px solid #c8c8c8; display: flex; align-items: center; justify-content: center; }
.info { margin: 7px 0 1px; height: 18px; line-height: 18px; font-size: 15px; white-space: nowrap; letter-spacing: -.2px; }
.switch { margin: 6px 0 0 204px; display: flex; height: 43px; gap: 13px; align-items: flex-start; }
.btn { background: #e1e1e1; border: 1px solid #adadad; display: flex; align-items: center; justify-content: center; white-space: nowrap; padding-bottom: 2px; }
.btn svg { margin-top: 2px; }
.btn-off { width: 135px; height: 30px; gap: 3px; color: #a0a0a0; background: #e8e8e8; margin-left: -1px; }
.lists { margin-top: 6px; display: grid; grid-template-columns: 352px 347px; gap: 12px; }
.list-label { height: 21px; line-height: 20px; }
.listbox { height: 170px; border: 1px solid #7f7f7f; background: #fff; display: flex; flex-direction: column; }
.list-tools { height: 32px; flex: none; display: flex; gap: 2px; padding: 2px 1px 0; border-bottom: 1px solid #7f7f7f; }
.tool { height: 28px; gap: 1px; }
.tool-add { width: 93px; gap: 3px; border: 2px solid #0078d7; outline: 1px dotted #333; outline-offset: -3px; }
.tool-edit { width: 93px; }
.tool-del { width: 94px; gap: 5px; padding-left: 2px; }
.tool-up { width: 33px; }
.tool-down { width: 30px; }
.rows-left { padding-top: 6px; }
.lrow { height: 26px; display: flex; align-items: center; padding-left: 1px; }
.lrow-sel { background: #e0e0e4; }
.chk { width: 16px; height: 16px; border: 1px solid #333; background: #fff; display: flex; align-items: center; justify-content: center; flex: none; }
.ltext { margin: -1px 0 0 26px; font-size: 14px; }
.rows-right { flex: 1; display: flex; min-height: 0; }
.rows-right .rows { flex: 1; padding-top: 1px; }
.rrow { height: 26px; display: flex; align-items: center; padding-left: 2px; }
.rtext { margin: 0 0 0 26px; font-size: 15px; }
.list-sb { width: 20px; background: #f0f0f0; display: flex; flex-direction: column; align-items: center; padding-top: 7px; }
.list-thumb { width: 20px; height: 40px; background: #cdcdcd; margin-top: 8px; }
.list-sb-down { margin: auto 0 8px; }
.dl-foot { margin-top: 20px; display: flex; height: 30px; }
.foot-hidden { width: 209px; padding-bottom: 1px; }
.foot-ok { width: 85px; margin-left: auto; background: #e1e1e1; padding-bottom: 0; }
.foot-cancel { width: 86px; margin-left: 14px; padding-bottom: 0; }

/* annotations */
.redbox { position: absolute; left: 1580px; top: 439px; width: 119px; height: 50px; border: 3px solid #f23a3c; }
.redarrow { position: absolute; left: 1546px; top: 373px; }

/* watermark */
.watermark { position: absolute; left: 1460px; top: 830px; width: 400px; height: 175px; pointer-events: none; }
.wm-paw { position: absolute; left: 130px; top: 3px; }
.wm-bai, .wm-du, .wm-url, .wm-cn { position: absolute; color: rgba(255,255,255,.5); -webkit-text-stroke: 1.500px rgba(200,200,200,.65); white-space: nowrap; font-family: "Liberation Sans", sans-serif; }
.wm-bai { left: 13px; top: 40px; font-size: 80px; line-height: 84px; font-weight: 700; }
.wm-du { left: 150px; top: 71px; font-size: 44px; line-height: 50px; font-weight: 700; }
.wm-cn { left: 235px; top: 50px; font-size: 58px; line-height: 70px; font-weight: 700; font-family: "Noto Sans CJK SC", sans-serif; }
.wm-url { left: 13px; top: 125px; font-size: 43px; line-height: 46px; }
```
